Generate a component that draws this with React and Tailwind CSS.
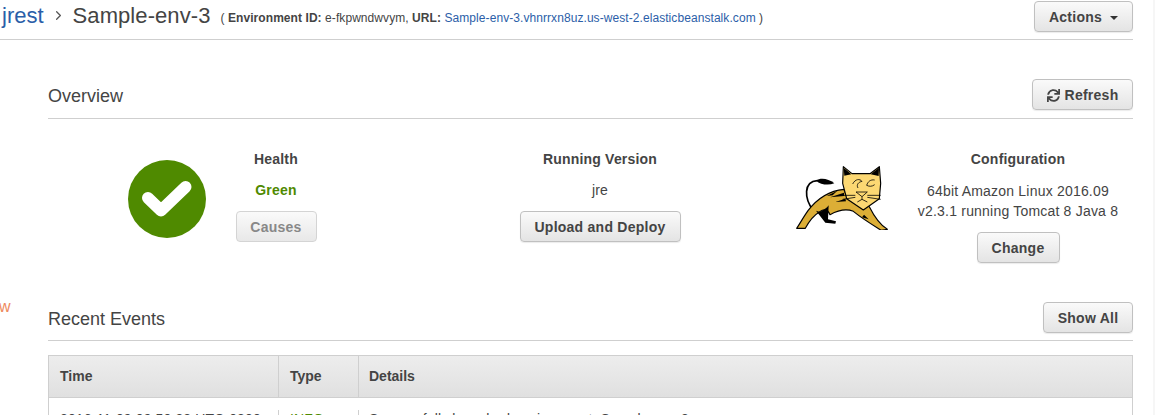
import { ChevronRight } from "lucide-react";
import { FaSync } from "react-icons/fa";

const btn =
  "inline-flex items-center justify-center rounded-[4px] border border-[#c0c0c0] bg-gradient-to-b from-[#fafafa] to-[#e4e4e4] pt-[1px] text-[14px] font-bold tracking-[0.25px] text-[#444] shadow-[0_1px_1px_rgba(0,0,0,0.08)]";

function CheckBadge() {
  return (
    <svg width="78" height="78" viewBox="0 0 78 78" className="shrink-0">
      <circle cx="39" cy="39" r="39" fill="#4f8a00" />
      <path d="M20 38 L33 50.5 L57.5 27" fill="none" stroke="#fff" strokeWidth="12" strokeLinecap="round" strokeLinejoin="round" />
    </svg>
  );
}

function Tomcat() {
  return (
    <svg width="92" height="65" viewBox="48 75 276 195" className="mt-[5px] shrink-0">
      {/* tail */}
      <path d="M100 212 C72 175 70 125 112 122" fill="none" stroke="#000" strokeWidth="5" />
      <path d="M108 122 C122 112 145 116 163 130 C145 137 122 134 108 122 Z" fill="#000" />
      {/* body */}
      <path
        d="M192 148 C150 152 112 175 84 212 C70 232 60 250 50 265 L76 265 C86 246 98 228 118 216 C132 206 142 206 150 224 C172 212 200 206 220 214 C250 238 280 256 304 271 L322 268 C300 254 284 232 268 200 L200 170 Z"
        fill="#dcae36"
        stroke="#000"
        strokeWidth="3.5"
        strokeLinejoin="round"
      />
      {/* back leg shadow */}
      <path d="M108 212 L120 216 C132 208 140 206 146 196 L144 238 L168 244 L166 251 L136 248 Z" fill="#000" />
      {/* stripes */}
      <path d="M192 158 L150 172 L192 168 Z M196 176 L166 186 L198 184 Z M172 152 L140 168 L158 166 Z M252 224 L266 238 L246 232 Z" fill="#000" />
      {/* head */}
      <path
        d="M190 80 L216 101 L270 101 L298 80 L302 130 L298 176 L250 210 L200 176 L188 130 Z"
        fill="#fcd873"
        stroke="#000"
        strokeWidth="3.5"
        strokeLinejoin="round"
      />
      <path d="M191 83 L214 103 L193 107 Z M297 83 L272 103 L296 108 Z" fill="#000" />
      {/* face */}
      <path
        d="M218 132 C226 116 240 116 246 124 C236 126 228 134 234 144 M284 120 C272 118 264 124 260 136 C268 140 276 140 284 134 M228 156 L262 156 L246 170 Z M246 170 L246 178 M232 186 L246 178 L262 186 M184 166 L226 166 M188 178 L226 172 M262 166 L302 166 M262 172 L302 178"
        fill="none"
        stroke="#000"
        strokeWidth="2.4"
      />
    </svg>
  );
}

function SectionHeader({ title, titleClass, children }) {
  return (
    <div className="flex h-[40px] items-center justify-between border-b border-[#cfcfcf]">
      <h2 className={`text-[18px] text-[#444] ${titleClass}`}>{title}</h2>
      {children}
    </div>
  );
}

export default function App() {
  return (
    <div className="h-[415px] w-[1155px] overflow-hidden border-r-2 border-[#f6f6f6] bg-white font-['Liberation_Sans',Arial,sans-serif]">
      {/* Breadcrumb header */}
      <div className="mr-[20px] flex h-[40px] items-center justify-between border-b border-[#cfcfcf] pl-[2px]">
        <div className="mb-[9px] flex items-center">
          <a className="text-[22px] text-[#2b5ea8]">jrest</a>
          <ChevronRight size={15} strokeWidth={2} className="mx-[7px] text-[#555]" />
          <span className="text-[22px] tracking-[0.08px] text-[#444]">Sample-env-3</span>
          <span className="ml-[10px] mt-[5px] text-[12px] tracking-[0.07px] text-[#444]">
            ( <b>Environment ID:</b> e-fkpwndwvym, <b>URL:</b>{" "}
            <a className="text-[#2b5ea8]">Sample-env-3.vhnrrxn8uz.us-west-2.elasticbeanstalk.com</a> )
          </span>
        </div>
        <button className={`${btn} mb-[6px] h-[31px] w-[99px] gap-[8px]`}>
          Actions
          <span className="mt-[1px] border-x-[4px] border-t-[4px] border-x-transparent border-t-[#333]" />
        </button>
      </div>

      <div className="flex">
        <div className="w-[48px] shrink-0 pt-[258px] text-[16px] leading-[18px] text-[#ee8a60]">
          <span className="-ml-[1px] block">w</span>
        </div>

        <div className="mr-[20px] min-w-0 flex-1">
          {/* Overview */}
          <div className="pt-[39px]">
            <SectionHeader title="Overview" titleClass="pb-[4px]">
              <button className={`${btn} mb-[8px] h-[31px] w-[101px] gap-[5px]`}>
                <FaSync size={13} />
                Refresh
              </button>
            </SectionHeader>
          </div>

          <div className="mt-[41px] flex h-[141px] items-start tracking-[0.2px]">
            <div className="ml-[80px]">
              <CheckBadge />
            </div>

            <div className="ml-[10px] flex w-[120px] shrink-0 flex-col items-center text-[14px] text-[#444]">
              <div className="-mt-[10px] font-bold leading-[18px]">Health</div>
              <div className="mt-[13px] font-bold leading-[18px] text-[#4f8a00]">Green</div>
              <button className={`${btn} mt-[12px] h-[31px] w-[81px] border-[#d4d4d4] from-[#ececec] to-[#e8e8e8] text-[#888] shadow-none`}>
                Causes
              </button>
            </div>

            <div className="ml-[144px] flex w-[240px] shrink-0 flex-col items-center text-[14px] text-[#444]">
              <div className="-mt-[10px] font-bold leading-[18px]">Running Version</div>
              <div className="mt-[13px] leading-[18px]">jre</div>
              <button className={`${btn} mt-[12px] h-[31px] w-[161px]`}>Upload and Deploy</button>
            </div>

            <div className="ml-[76px]">
              <Tomcat />
            </div>

            <div className="ml-[30px] flex w-[200px] shrink-0 flex-col items-center text-[14px] text-[#444]">
              <div className="-mt-[10px] font-bold leading-[18px]">Configuration</div>
              <div className="mt-[13px] whitespace-nowrap text-center leading-[20px]">
                64bit Amazon Linux 2016.09
                <br />
                v2.3.1 running Tomcat 8 Java 8
              </div>
              <button className={`${btn} mt-[11px] h-[31px] w-[83px]`}>Change</button>
            </div>
          </div>

          {/* Recent Events */}
          <SectionHeader title="Recent Events" titleClass="pb-[2px]">
            <button className={`${btn} mb-[6px] h-[31px] w-[90px]`}>Show All</button>
          </SectionHeader>

          <div className="mt-[14px] border-t border-[#cfcfcf]">
            <div className="flex h-[42px] items-center border-x border-b border-[#cfcfcf] bg-gradient-to-b from-[#ededed] to-[#e0e0e0] text-[14px] font-bold text-[#444]">
              <div className="flex h-full w-[230px] shrink-0 items-center border-r border-[#cfcfcf] pl-[11px]">Time</div>
              <div className="flex h-full w-[80px] shrink-0 items-center border-r border-[#cfcfcf] pl-[11px]">Type</div>
              <div className="pl-[10px]">Details</div>
            </div>
            <div className="flex border-x border-[#cfcfcf] pt-[12px] text-[14px] leading-[18px] tracking-[0.12px] text-[#444]">
              <div className="w-[230px] shrink-0 border-r border-[#cfcfcf] pl-[11px]">2016-11-09 09:50:38 UTC-0800</div>
              <div className="w-[80px] shrink-0 border-r border-[#cfcfcf] pl-[11px] text-[#4f8a00]">INFO</div>
              <div className="pl-[10px]">Successfully launched environment: Sample-env-3</div>
            </div>
          </div>
        </div>
      </div>
    </div>
  );
}
